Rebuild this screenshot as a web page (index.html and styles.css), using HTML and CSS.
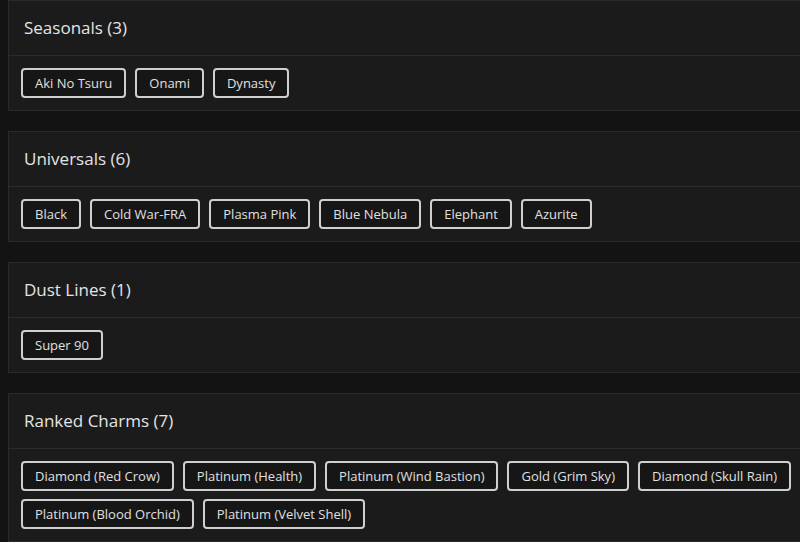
FILE: index.html
```html
<!DOCTYPE html>
<html>
<head>
<meta charset="utf-8">
<link rel="stylesheet" href="styles.css">
</head>
<body>
<div class="list">
  <section class="card">
    <div class="card-head">Seasonals (3)</div>
    <div class="card-body">
      <span class="chip">Aki No Tsuru</span>
      <span class="chip">Onami</span>
      <span class="chip">Dynasty</span>
    </div>
  </section>
  <section class="card">
    <div class="card-head">Universals (6)</div>
    <div class="card-body">
      <span class="chip">Black</span>
      <span class="chip">Cold War-FRA</span>
      <span class="chip">Plasma Pink</span>
      <span class="chip">Blue Nebula</span>
      <span class="chip">Elephant</span>
      <span class="chip">Azurite</span>
    </div>
  </section>
  <section class="card">
    <div class="card-head">Dust Lines (1)</div>
    <div class="card-body">
      <span class="chip">Super 90</span>
    </div>
  </section>
  <section class="card">
    <div class="card-head">Ranked Charms (7)</div>
    <div class="card-body">
      <span class="chip">Diamond (Red Crow)</span>
      <span class="chip">Platinum (Health)</span>
      <span class="chip">Platinum (Wind Bastion)</span>
      <span class="chip">Gold (Grim Sky)</span>
      <span class="chip">Diamond (Skull Rain)</span>
      <span class="chip">Platinum (Blood Orchid)</span>
      <span class="chip">Platinum (Velvet Shell)</span>
    </div>
  </section>
</div>
</body>
</html>
```

FILE: styles.css
```css
html, body {
  margin: 0;
  padding: 0;
  background: #131313;
  overflow: hidden;
  height: 542px;
}
body {
  font-family: "Open Sans", "Liberation Sans", sans-serif;
  color: #e2e2e2;
  padding: 0 0 0 8px;
}
.list {
  width: 830px;
  display: flex;
  flex-direction: column;
  gap: 20px;
}
.card {
  background: #1b1b1b;
  border: 1px solid #2a2a2a;
}
.card-head {
  padding: 17px 15px;
  line-height: 20px;
  font-size: 17px;
  font-weight: 500;
  color: #e4e4e4;
  border-bottom: 1px solid #2c2c2c;
}
.card-body {
  padding: 12px 12px;
  display: flex;
  flex-wrap: wrap;
  gap: 8px 9px;
}
.chip {
  box-sizing: border-box;
  height: 30px;
  display: inline-flex;
  align-items: center;
  padding: 0 12px;
  border: 2px solid #cfcfcf;
  border-radius: 4px;
  background: #161616;
  font-size: 13px;
  color: #e0e0e0;
}
```
